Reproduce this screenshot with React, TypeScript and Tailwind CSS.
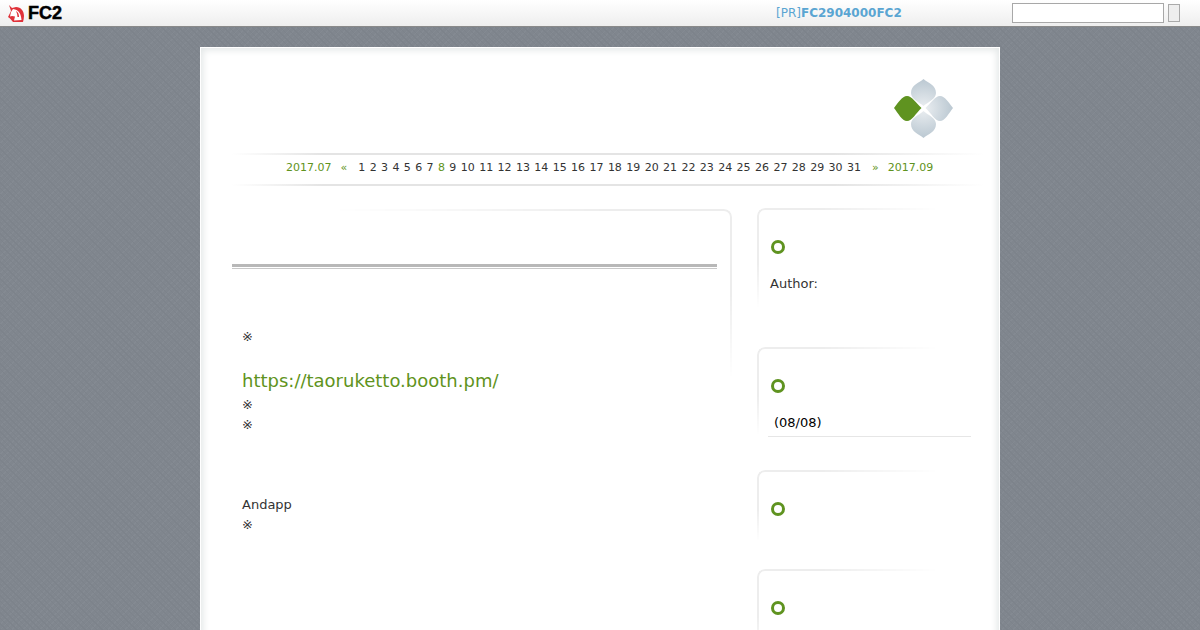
const days = Array.from({ length: 31 }, (_, i) => i + 1);

function Ring() {
  return <div className="w-[14px] h-[14px] rounded-full border-[3px] border-[#5f9320] bg-white" />;
}

function SidePanel({ height, children }: { height: string; children?: React.ReactNode }) {
  return (
    <div className={`relative ${height}`}>
      <div className="absolute inset-0 pointer-events-none rounded-tl-lg border-t-2 border-l-2 border-[#ededed] [mask-image:linear-gradient(to_right,#000_30%,transparent_85%),linear-gradient(to_bottom,#000_40%,transparent_72%)] [mask-composite:intersect]" />
      <div className="pl-[14px] pt-[32px]">
        <Ring />
        {children}
      </div>
    </div>
  );
}

function Logo() {
  return (
    <svg width="64" height="64" viewBox="0 0 64 64">
      <defs>
        <radialGradient id="petal" gradientUnits="userSpaceOnUse" cx="33.5" cy="33.5" r="31">
          <stop offset="0" stopColor="#eceff2" />
          <stop offset="1" stopColor="#b8c6d0" />
        </radialGradient>
      </defs>
      <path d="M33.5 4C38 8 46 10 46 18C46 24 38 27 33.5 31C29 27 21 24 21 18C21 10 29 8 33.5 4Z" fill="url(#petal)" />
      <path d="M33.5 63C38 59 46 57 46 49C46 43 38 40 33.5 36C29 40 21 43 21 49C21 57 29 59 33.5 63Z" fill="url(#petal)" />
      <path d="M63 33C59 28 55 21 50 21C45 21 41 28 35.500 33C41 38 45 46 50 46C55 46 59 38 63 33Z" fill="url(#petal)" />
      <path d="M4 33C8 28 12 21 17 21C22 21 26 28 31.500 33C26 38 22 46 17 46C12 46 8 38 4 33Z" fill="#5f9320" />
    </svg>
  );
}

export default function App() {
  return (
    <div className="h-[630px] overflow-hidden bg-[#80868e] [background-image:repeating-linear-gradient(45deg,#7d838b_0,#7d838b_1px,transparent_1px,transparent_4px),repeating-linear-gradient(-45deg,#848a92_0,#848a92_1px,transparent_1px,transparent_4px)] font-['DejaVu_Sans',sans-serif] text-[13px] text-[#333]">
      {/* fc2 header */}
      <div className="h-[27px] flex items-center border-b border-[#8a8a8a] bg-gradient-to-b from-white to-[#eeeeee]">
        <div className="flex items-center pl-[8px] w-[776px]">
          <svg width="16" height="17" viewBox="0 0 16 17" fill="none">
            <path d="M1 0L4 3L8 2C13 2 16 6 16 11C16 13 15.500 15 15 17L5 17L2 13.500L0 12L3 6Z" fill="#e0323a" />
            <path d="M3 7L5 4L7 4.500C11 5.500 13 9 13.500 15L6 15.500L7 11.500L4 11L2 11.500Z" fill="#fff" />
            <path d="M8 6C10 7 11 9 11 12L9.500 12C9.500 10 9 8 8 6Z" fill="#e0323a" />
          </svg>
          <span className="ml-[4px] font-['Liberation_Sans',sans-serif] font-bold text-[18px] leading-none text-black [-webkit-text-stroke:0.5px_black]">FC2</span>
        </div>
        <div className="w-[236px] text-[12px] text-[#5aa5d2]">
          [PR]<span className="font-bold">FC2904000FC2</span>
        </div>
        <input className="w-[152px] h-[20px] border border-[#a8a8a8] bg-white" />
        <button className="ml-[4px] w-[12px] h-[18px] border border-[#aaaaaa] bg-[#eeeeee]" />
      </div>

      {/* page */}
      <div className="w-[800px] h-[700px] mx-auto mt-[20px] border border-white bg-white shadow-[inset_0_0_7px_2px_#e3e7e7]">
        <div className="h-[105px] flex justify-end pr-[45px] pt-[27px]">
          <Logo />
        </div>

        <div className="ml-[31px] mr-[14px] h-[2px] bg-[linear-gradient(to_right,transparent,#e4e4e4_12%,#e4e4e4_80%,transparent)]" />
        <div className="h-[29px] flex items-center pb-[2px] pl-[85px] text-[11px]">
          <span className="text-[#5f9320]">2017.07</span>
          <span className="text-[#5f9320] ml-[9px]">«</span>
          <div className="flex gap-[4.4px] ml-[11px]">
            {days.map((d) => (
              <span key={d} className={d === 8 ? "text-[#5f9320]" : ""}>{d}</span>
            ))}
          </div>
          <span className="text-[#5f9320] ml-[11px]">»</span>
          <span className="text-[#5f9320] ml-[9px]">2017.09</span>
        </div>
        <div className="ml-[31px] mr-[14px] h-[2px] bg-[linear-gradient(to_right,transparent,#e4e4e4_12%,#e4e4e4_80%,transparent)]" />

        <div className="flex mt-[23px] ml-[31px]">
          <div className="relative w-[500px] h-[170px] shrink-0">
            <div className="absolute inset-0 pointer-events-none rounded-tr-lg border-t-2 border-r-2 border-[#ededed] [mask-image:linear-gradient(to_right,transparent_20%,#000_75%),linear-gradient(to_bottom,#000_50%,transparent)] [mask-composite:intersect]" />
            <div className="h-[55px]" />
            <div className="w-[485px] h-[3px] bg-[#b8b8b8]" />
            <div className="w-[485px] h-[2px] mb-[58px] border-b border-[#c8c8c8]" />
            <p className="h-5 leading-5 pl-[10px]">※</p>
            <p className="h-5" />
            <a className="block h-[28px] leading-[28px] pl-[10px] text-[18px] text-[#5f9320]">https://taoruketto.booth.pm/</a>
            <p className="h-5 leading-5 pl-[10px]">※</p>
            <p className="h-5 leading-5 pl-[10px]">※</p>
            <p className="h-[60px]" />
            <p className="h-5 leading-5 pl-[10px]">Andapp</p>
            <p className="h-5 leading-5 pl-[10px]">※</p>
          </div>

          <div className="ml-[25px] w-[214px] flex flex-col -mt-[1px]">
            <SidePanel height="h-[139px]">
              <p className="mt-[20px] -ml-px leading-5">Author:</p>
            </SidePanel>
            <SidePanel height="h-[123px]">
              <p className="mt-[20px] ml-[3px] leading-5 text-black">(08/08)</p>
              <div className="mt-[3px] -ml-[3px] h-px bg-[#e6e6e6]" />
            </SidePanel>
            <SidePanel height="h-[99px]" />
            <SidePanel height="h-[120px]" />
          </div>
        </div>
      </div>
    </div>
  );
}
